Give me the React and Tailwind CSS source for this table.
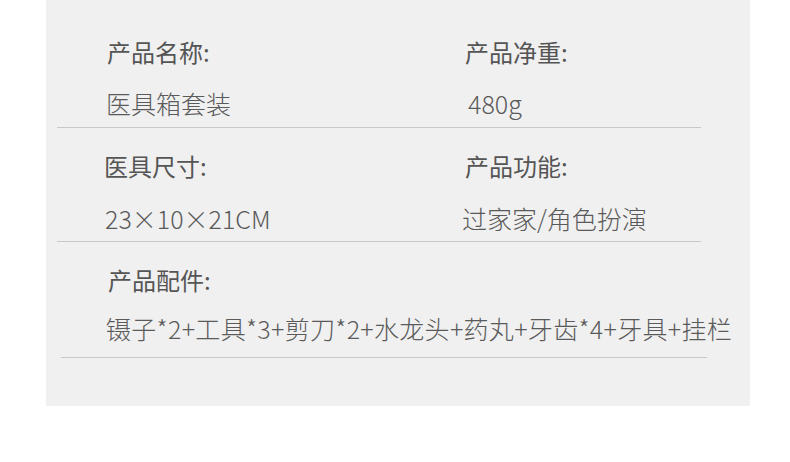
import React from 'react';

const font = { fontFamily: '"Noto Sans CJK SC", "Noto Sans", sans-serif' };

const Label = ({ children, className = '' }) => (
    <div className={`h-[38px] leading-[38px] text-[24px] font-normal text-[#555555] whitespace-nowrap ${className}`}>{children}</div>
);

const Value = ({ children, className = '' }) => (
    <div className={`h-[38px] leading-[38px] text-[25px] font-light text-[#5a5a5a] whitespace-nowrap ${className}`}>{children}</div>
);

const App = () => {
    return (
        <div className="w-[790px] h-[462px] bg-white" style={font}>
            <div className="ml-[46px] w-[704px] h-[406px] bg-[#f0f0f0]">
                {/* row 1 */}
                <div className="ml-[11px] w-[644px] border-b border-[#c8c8c8] pt-[33px] pb-[5px] grid grid-cols-[408px_1fr]">
                    <div>
                        <Label className="ml-[50px]">产品名称:</Label>
                        <Value className="ml-[49px] mt-[13px]">医具箱套装</Value>
                    </div>
                    <div>
                        <Label>产品净重:</Label>
                        <Value className="ml-[3px] mt-[13px]">480g</Value>
                    </div>
                </div>

                {/* row 2 */}
                <div className="ml-[11px] w-[644px] border-b border-[#c8c8c8] pt-[19px] pb-[4px] grid grid-cols-[408px_1fr]">
                    <div>
                        <Label className="ml-[47px]">医具尺寸:</Label>
                        <Value className="ml-[48px] mt-[14px]">23×10×21CM</Value>
                    </div>
                    <div>
                        <Label>产品功能:</Label>
                        <Value className="-ml-[3px] mt-[14px]">过家家/角色扮演</Value>
                    </div>
                </div>

                {/* row 3 */}
                <div className="ml-[15px] w-[646px] border-b border-[#c8c8c8] pt-[19px] pb-[10px]">
                    <Label className="ml-[47px]">产品配件:</Label>
                    <Value className="ml-[45px] mt-[10px] tracking-[0.3px]">镊子*2+工具*3+剪刀*2+水龙头+药丸+牙齿*4+牙具+挂栏</Value>
                </div>
            </div>
        </div>
    );
};

export default App;
